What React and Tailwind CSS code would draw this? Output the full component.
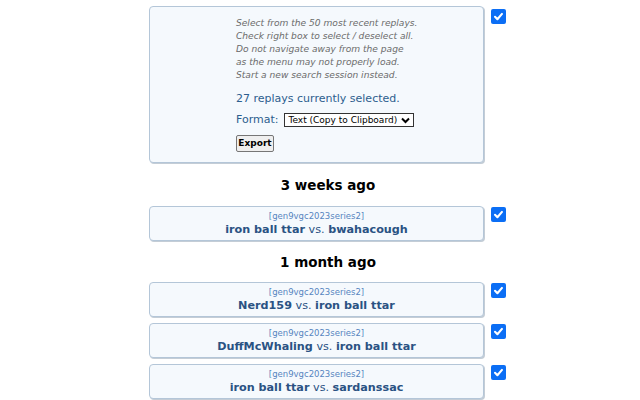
import React from "react";

function Check() {
  return (
    <div className="w-[15px] h-[15px] rounded-[2px] bg-[#0b6ef5] flex items-center justify-center shrink-0">
      <svg width="11" height="11" viewBox="0 0 12 12">
        <path d="M2.2 6.4 L4.8 9 L9.8 3.2" fill="none" stroke="white" strokeWidth="2.3" strokeLinecap="round" strokeLinejoin="round" />
      </svg>
    </div>
  );
}

function Card({ p1, p2 }) {
  return (
    <div className="flex items-start gap-[7px]">
      <div className="w-[335px] h-[35px] rounded-[4px] border border-[#b4c6d8] bg-[#f5f9fd] shadow-[1px_1px_0_#c4cdd6] flex flex-col items-center pt-[4px]">
        <div className="text-[8.5px] leading-[11px] text-[#5585c0]">[gen9vgc2023series2]</div>
        <div className="text-[11.2px] leading-[16px] text-[#2a5283]">
          <span className="font-bold">{p1}</span> vs. <span className="font-bold">{p2}</span>
        </div>
      </div>
      <div className="pt-[1px]"><Check /></div>
    </div>
  );
}

function Heading({ children, pt, pb }) {
  return (
    <div className={`w-[358px] text-center font-bold text-[13.5px] leading-[20px] text-black ${pt} ${pb}`}>{children}</div>
  );
}

export default function App() {
  return (
    <div className="w-[640px] h-[400px] bg-white overflow-hidden pl-[149px] pt-[6px]" style={{ fontFamily: '"DejaVu Sans", Verdana, sans-serif' }}>
      <div className="flex items-start gap-[7px]">
        <div className="w-[335px] h-[157px] rounded-[4px] border border-[#b4c6d8] bg-[#f5f9fd] shadow-[1px_1px_0_#c4cdd6] pl-[86px] pt-[10px]">
          <div className="italic text-[9.1px] leading-[13px] text-[#6b6b6b]">
            <div>Select from the 50 most recent replays.</div>
            <div>Check right box to select / deselect all.</div>
            <div>Do not navigate away from the page</div>
            <div>as the menu may not properly load.</div>
            <div>Start a new search session instead.</div>
          </div>
          <div className="mt-[9px] text-[11px] leading-[15px] text-[#2d5e8e]">27 replays currently selected.</div>
          <div className="mt-[6px] flex items-center gap-[6px] text-[11px] text-[#2d5e8e]">
            <span>Format:</span>
            <div className="h-[14px] border border-[#333] bg-white flex items-center pl-[3px] pr-[3px] gap-[4px] text-[9px] text-black leading-none">
              <span>Text (Copy to Clipboard)</span>
              <svg width="9" height="7" viewBox="0 0 9 7"><path d="M1 1.5 L4.5 5 L8 1.5" fill="none" stroke="black" strokeWidth="2" /></svg>
            </div>
          </div>
          <div className="mt-[6px] inline-flex items-center justify-center h-[17px] w-[38px] border border-[#767676] rounded-[2px] bg-[#efefef] text-[9px] font-bold text-black">Export</div>
        </div>
        <div className="pt-[3px]"><Check /></div>
      </div>
      <Heading pt="pt-[12px]" pb="pb-[11px]">3 weeks ago</Heading>
      <Card p1="iron ball ttar" p2="bwahacough" />
      <Heading pt="pt-[11px]" pb="pb-[10px]">1 month ago</Heading>
      <div className="flex flex-col gap-[6px]">
        <Card p1="Nerd159" p2="iron ball ttar" />
        <Card p1="DuffMcWhaling" p2="iron ball ttar" />
        <Card p1="iron ball ttar" p2="sardanssac" />
      </div>
    </div>
  );
}
